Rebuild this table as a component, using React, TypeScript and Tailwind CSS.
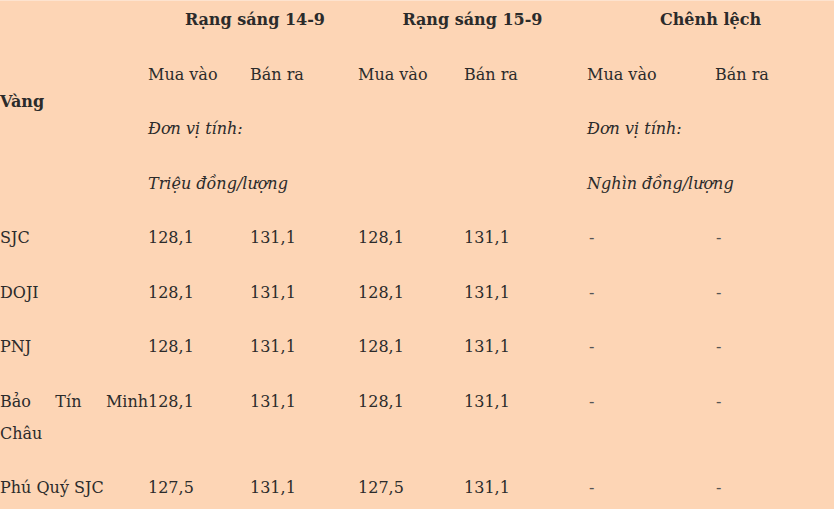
import React from "react";

const rows = [
  { name: "SJC", v: ["128,1", "131,1", "128,1", "131,1"] },
  { name: "DOJI", v: ["128,1", "131,1", "128,1", "131,1"] },
  { name: "PNJ", v: ["128,1", "131,1", "128,1", "131,1"] },
  { name: "Bảo Tín Minh Châu", v: ["128,1", "131,1", "128,1", "131,1"] },
  { name: "Phú Quý SJC", v: ["127,5", "131,1", "127,5", "131,1"] },
];

const pad = "px-0 py-[11.25px]";
const cell = `${pad} align-middle text-left`;
const body = `${pad} align-top`;

export default function App() {
  return (
    <div className="min-h-[509px] overflow-hidden border-t border-[#fde3cf] bg-[#fdd5b5] text-[16px] leading-[32px] text-[#2b2b2b] [font-family:'DejaVu_Serif',serif]">
      <table className="-mt-[8px] w-[834px] table-fixed border-collapse">
        <colgroup>
          <col className="w-[148px]" />
          <col className="w-[102px]" />
          <col className="w-[108px]" />
          <col className="w-[106px]" />
          <col className="w-[123px]" />
          <col className="w-[128px]" />
          <col />
        </colgroup>
        <thead>
          <tr>
            <th rowSpan={4} className={`${cell} font-bold`}>
              Vàng
            </th>
            <th colSpan={2} className={`${pad} pl-[4px] text-center font-bold`}>
              Rạng sáng 14-9
            </th>
            <th colSpan={2} className={`${pad} text-center font-bold`}>
              Rạng sáng 15-9
            </th>
            <th colSpan={2} className={`${pad} text-center font-bold`}>
              Chênh lệch
            </th>
          </tr>
          <tr>
            <td className={cell}>Mua vào</td>
            <td className={cell}>Bán ra</td>
            <td className={cell}>Mua vào</td>
            <td className={cell}>Bán ra</td>
            <td className={cell}>Mua vào</td>
            <td className={cell}>Bán ra</td>
          </tr>
          <tr className="italic">
            <td colSpan={4} className={cell}>
              Đơn vị tính:
            </td>
            <td colSpan={2} className={cell}>
              Đơn vị tính:
            </td>
          </tr>
          <tr className="italic">
            <td colSpan={4} className={cell}>
              Triệu đồng/lượng
            </td>
            <td colSpan={2} className={cell}>
              Nghìn đồng/lượng
            </td>
          </tr>
        </thead>
        <tbody>
          {rows.map((r, idx) => (
            <tr key={idx}>
              <td className={`${body} text-justify`}>{r.name}</td>
              {r.v.map((n, i) => (
                <td key={i} className={`${body} text-left`}>
                  {n}
                </td>
              ))}
              <td className={`${body} pl-[2px] text-left text-[#555]`}>-</td>
              <td className={`${body} pl-[1px] text-left text-[#555]`}>-</td>
            </tr>
          ))}
        </tbody>
      </table>
    </div>
  );
}
